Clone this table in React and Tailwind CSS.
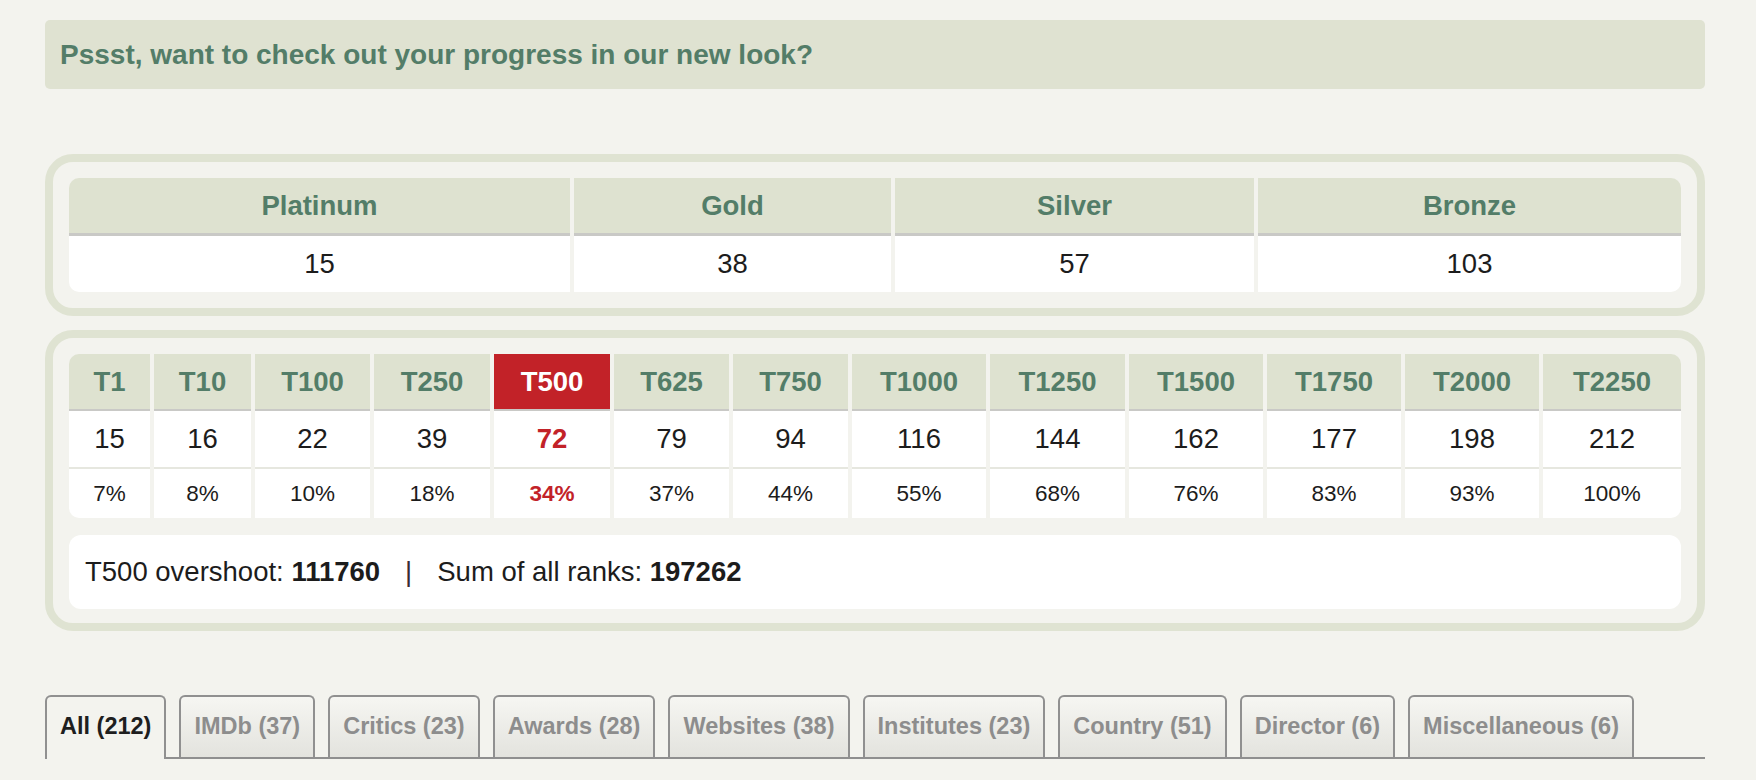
import React from 'react';

const medals = [
    { label: 'Platinum', value: 15 },
    { label: 'Gold', value: 38 },
    { label: 'Silver', value: 57 },
    { label: 'Bronze', value: 103 },
];

const ranks = [
    ['T1', 15, '7%'],
    ['T10', 16, '8%'],
    ['T100', 22, '10%'],
    ['T250', 39, '18%'],
    ['T500', 72, '34%'],
    ['T625', 79, '37%'],
    ['T750', 94, '44%'],
    ['T1000', 116, '55%'],
    ['T1250', 144, '68%'],
    ['T1500', 162, '76%'],
    ['T1750', 177, '83%'],
    ['T2000', 198, '93%'],
    ['T2250', 212, '100%'],
];

const tabs = [
    'All (212)',
    'IMDb (37)',
    'Critics (23)',
    'Awards (28)',
    'Websites (38)',
    'Institutes (23)',
    'Country (51)',
    'Director (6)',
    'Miscellaneous (6)',
];

const current = 'T500';

const App = () => {
    return (
        <div
            className="min-h-screen bg-[#f3f3ee] pt-[20px]"
            style={{ fontFamily: '"Liberation Sans", Arial, sans-serif' }}
        >
            <div className="ml-[45px] w-[1660px]">
                {/* banner */}
                <div className="h-[69px] flex items-center px-[15px] bg-[#dfe2d1] rounded-[5px]">
                    <span className="text-[28px] font-bold text-[#537d68]">
                        Pssst, want to check out your progress in our new look?
                    </span>
                </div>

                {/* medals */}
                <div className="mt-[65px] border-[8px] border-[#dfe3d2] rounded-[28px] p-[16px]">
                    <div className="grid grid-cols-[501px_317px_359px_1fr] gap-x-[4px]">
                        {medals.map((m, i) => (
                            <div
                                key={m.label}
                                className={`h-[58px] flex items-center justify-center bg-[#dee2d0] border-b-[3px] border-[#c9c9c6] text-[27.5px] font-bold text-[#537d68] ${i === 0 ? 'rounded-tl-[10px]' : ''} ${i === 3 ? 'rounded-tr-[10px]' : ''}`}
                            >
                                {m.label}
                            </div>
                        ))}
                        {medals.map((m, i) => (
                            <div
                                key={m.label + '-v'}
                                className={`h-[56px] flex items-center justify-center bg-white text-[27.5px] text-[#1c1c1c] ${i === 0 ? 'rounded-bl-[10px]' : ''} ${i === 3 ? 'rounded-br-[10px]' : ''}`}
                            >
                                {m.value}
                            </div>
                        ))}
                    </div>
                </div>

                {/* ranks */}
                <div className="mt-[14px] border-[8px] border-[#dfe3d2] rounded-[28px] pt-[16px] px-[16px] pb-[14px]">
                    <div className="grid grid-cols-[81px_97px_115px_116px_116px_115px_115px_134px_135px_134px_134px_134px_1fr] gap-x-[4px]">
                        {ranks.map(([name], i) => (
                            <div
                                key={name}
                                className={`h-[57px] flex items-center justify-center border-b-[2px] border-[#c9c9c6] text-[27.5px] font-bold ${name === current ? 'bg-[#c22228] text-white' : 'bg-[#dee2d0] text-[#537d68]'} ${i === 0 ? 'rounded-tl-[10px]' : ''} ${i === ranks.length - 1 ? 'rounded-tr-[10px]' : ''}`}
                            >
                                {name}
                            </div>
                        ))}
                        {ranks.map(([name, count]) => (
                            <div
                                key={name + '-c'}
                                className={`h-[58px] flex items-center justify-center bg-white border-b-[2px] border-[#e6e7df] text-[27.5px] ${name === current ? 'font-bold text-[#c22228]' : 'text-[#1c1c1c]'}`}
                            >
                                {count}
                            </div>
                        ))}
                        {ranks.map(([name, , pct], i) => (
                            <div
                                key={name + '-p'}
                                className={`h-[49px] flex items-center justify-center bg-white text-[22.5px] ${name === current ? 'font-bold text-[#c22228]' : 'text-[#1c1c1c]'} ${i === 0 ? 'rounded-bl-[10px]' : ''} ${i === ranks.length - 1 ? 'rounded-br-[10px]' : ''}`}
                            >
                                {pct}
                            </div>
                        ))}
                    </div>

                    <div className="mt-[17px] h-[74px] flex items-center px-[16px] bg-white rounded-[12px] text-[27.5px] text-[#1c1c1c]">
                        <span>T500 overshoot:&nbsp;</span>
                        <span className="font-bold">111760</span>
                        <span className="mx-[25px] text-[#3b2a33]">|</span>
                        <span>Sum of all ranks:&nbsp;</span>
                        <span className="font-bold">197262</span>
                    </div>
                </div>

                {/* tabs */}
                <div className="mt-[64px] flex items-end gap-x-[13px] border-b-[2px] border-[#8f8f8f]">
                    {tabs.map((t, i) => (
                        <div
                            key={t}
                            className={`h-[62px] px-[13px] flex items-center border-2 border-b-0 border-[#909090] rounded-t-[6px] text-[23.5px] font-bold whitespace-nowrap ${i === 0 ? 'bg-[#f3f3ee] text-[#1e1e1e] -mb-[2px] h-[64px] pb-[2px]' : 'bg-gradient-to-b from-[#f6f6f2] to-[#e3e3de] text-[#8d8d8d]'}`}
                        >
                            {t}
                        </div>
                    ))}
                </div>
            </div>
        </div>
    );
};

export default App;
